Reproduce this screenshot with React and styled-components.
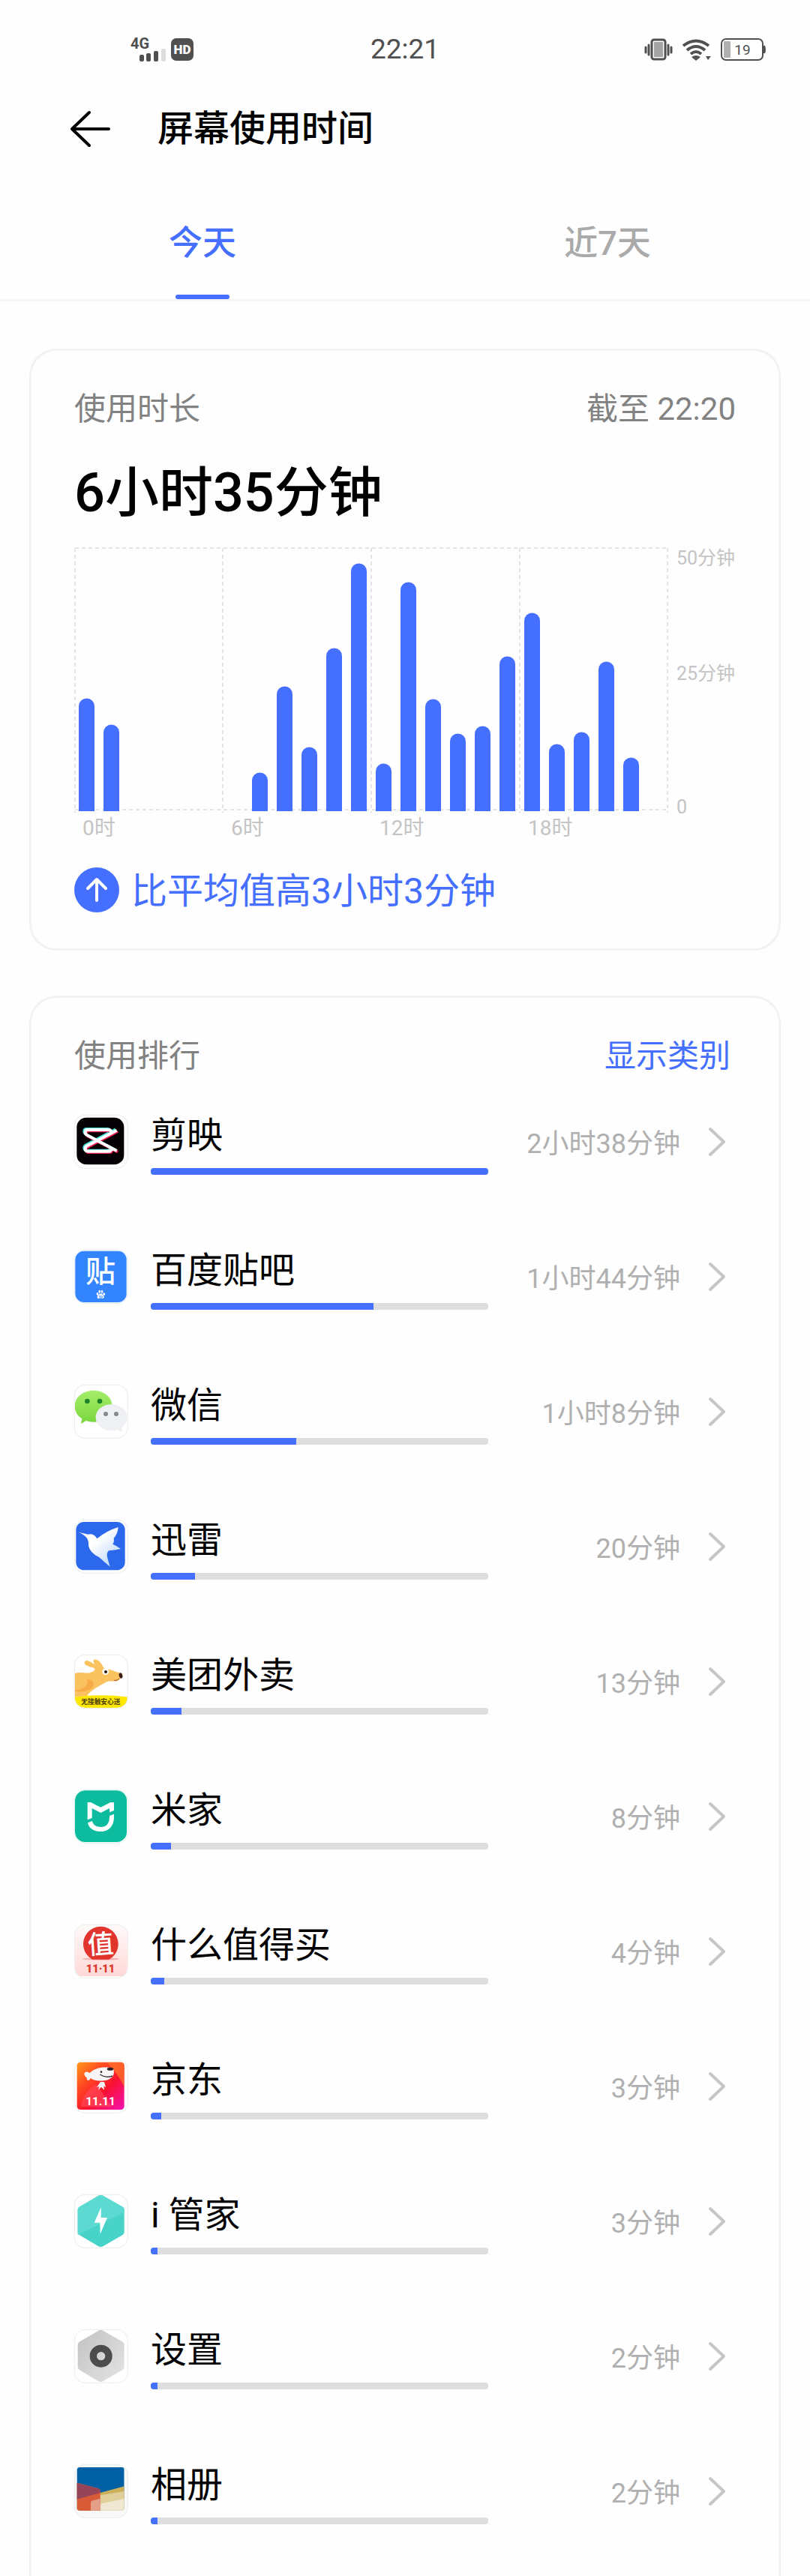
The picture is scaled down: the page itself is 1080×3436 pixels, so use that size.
import React, { useState } from 'react';
import styled, { createGlobalStyle } from 'styled-components';

const GlobalStyle = createGlobalStyle`
  * {
    box-sizing: border-box;
  }
  body {
    margin: 0;
    background: #fefefe;
    color: #000000;
    font-family: Roboto, 'Noto Sans CJK SC', sans-serif;
  }
  button {
    font-family: inherit;
    background: none;
    border: none;
    padding: 0;
    cursor: pointer;
  }
`;

const Page = styled.div`
  width: 100%;
`;

const StatusBar = styled.div`
  display: grid;
  grid-template-columns: 1fr auto 1fr;
  align-items: center;
  height: 112px;
  padding: 20px 58px 0 174px;
  color: #505050;
`;

const StatusGroup = styled.div`
  display: flex;
  align-items: center;
  gap: ${props => props.$gap}px;
  justify-content: ${props => (props.$end ? 'flex-end' : 'flex-start')};
  svg {
    overflow: visible;
  }
`;

const Clock = styled.time`
  font-size: 37px;
  line-height: 40px;
  margin-right: 116px;
`;

const TitleBar = styled.header`
  display: flex;
  align-items: center;
  gap: 62px;
  height: 120px;
  padding: 0 93px;
`;

const BackButton = styled.button`
  display: flex;
`;

const Title = styled.h1`
  margin: 0;
  font-size: 48px;
  font-weight: 500;
  line-height: 56px;
`;

const Tabs = styled.nav`
  display: flex;
  border-bottom: 3px solid #f6f6f6;
`;

const Tab = styled.button`
  flex: 1;
  display: flex;
  flex-direction: column;
  align-items: center;
  justify-content: space-between;
  height: 167px;
  padding-top: 65px;
  font-size: 45px;
  font-weight: 500;
  line-height: 56px;
  color: ${props => (props.$active ? '#456fff' : '#aaaaaa')};
  &::after {
    content: '';
    width: 72px;
    height: 6px;
    border-radius: 3px;
    background: ${props => (props.$active ? '#456fff' : 'transparent')};
  }
`;

const Main = styled.main`
  display: flex;
  flex-direction: column;
  gap: 60px;
  padding: 63px 39px 0;
`;

const Card = styled.section`
  border: 3px solid #f2f2f2;
  border-radius: 36px;
  padding: 50px 57px 48px;
`;

const RankingCard = styled(Card)`
  border-bottom: none;
  border-radius: 36px 36px 0 0;
  padding-bottom: 69px;
`;

const CardHeader = styled.div`
  display: flex;
  justify-content: space-between;
  font-size: 42px;
  line-height: 56px;
  color: #828282;
`;

const CardTitle = styled.h2`
  margin: 0;
  font-size: 42px;
  font-weight: 400;
  line-height: 56px;
`;

const CategoryButton = styled.button`
  margin-right: 7px;
  font-size: 42px;
  line-height: 56px;
  color: #456fff;
`;

const Total = styled.p`
  margin: 40px 0 28px;
  font-size: 72px;
  font-weight: 500;
  line-height: 88px;
`;

const ChartArea = styled.div`
  display: flex;
`;

const Plot = styled.div`
  flex: 1;
  svg {
    display: block;
    width: 100%;
  }
`;

const HourAxis = styled.div`
  display: flex;
  height: 40px;
  margin-top: 1px;
  font-size: 28px;
  line-height: 40px;
  color: #c4c4c4;
`;

const HourLabel = styled.span`
  flex: 1;
  padding-left: 11px;
`;

const MinuteAxis = styled.div`
  display: grid;
  grid-template-rows: 154px 178px 30px;
  width: 90px;
  padding-left: 11px;
  font-size: 25px;
  line-height: 30px;
  white-space: nowrap;
  color: #c4c4c4;
`;

const Compare = styled.div`
  display: flex;
  align-items: center;
  gap: 16px;
  margin-top: 32px;
  font-size: 48px;
  line-height: 56px;
  color: #456fff;
`;

const CompareText = styled.span`
  padding-top: 4px;
`;

const AppList = styled.ul`
  display: flex;
  flex-direction: column;
  gap: 100px;
  margin: 50px 0 0;
  padding: 0;
  list-style: none;
`;

const AppRow = styled.a`
  display: flex;
  height: 80px;
  padding-right: 12px;
  color: inherit;
  text-decoration: none;
`;

const AppInfo = styled.div`
  flex: 1;
  margin-left: 30px;
`;

const AppName = styled.div`
  font-size: 48px;
  line-height: 56px;
`;

const Track = styled.div`
  height: 9px;
  margin-top: 15px;
  border-radius: 4px;
  overflow: hidden;
  background: #dedede;
`;

const Fill = styled.div`
  height: 100%;
  background: #456fff;
`;

const Duration = styled.div`
  width: 256px;
  text-align: right;
  font-size: 36px;
  line-height: 78px;
  color: #b0b0b0;
`;

const Chevron = styled.svg`
  width: 26px;
  height: 72px;
  margin-left: 36px;
`;

const IconFrame = styled.svg`
  width: 72px;
  height: 72px;
  flex: none;
  overflow: visible;
`;

/* minutes used in each hour of the day, as bar heights */
const hours = [
  150, 115, 0, 0, 0, 0, 0, 51, 166, 85, 217, 330,
  63, 305, 149, 103, 113, 206, 264, 89, 105, 199, 71, 0,
];

function UsageChart() {
  return (
    <svg viewBox="0 0 792 354" role="img" aria-label="使用时长">
      <g stroke="#e4e4e4" strokeWidth="2" strokeDasharray="5 4">
        <path d="M1 1H791M1 350H791" />
        {[1, 198, 396, 594, 791].map(x => (
          <path key={x} d={`M${x} 1V354`} />
        ))}
      </g>
      {hours.map((h, i) => h > 0 && (
        <path
          key={i}
          fill="#456fff"
          d={`M${i * 33 + 6} 352v${-(h - 10)}a10.5 10.5 0 0 1 21 0v${h - 10}z`}
        />
      ))}
    </svg>
  );
}

function AppIcon({ children, label, id, bg = '#ffffff', border = '#ececec' }) {
  return (
    <IconFrame viewBox="0 0 216 216" aria-hidden="true">
      <defs>
        <clipPath id={`${id}-clip`}>
          <rect x="2" y="2" width="211" height="211" rx="42" />
        </clipPath>
      </defs>
      <rect x="1" y="1" width="213" height="213" rx="42" fill={bg} />
      <g clipPath={`url(#${id}-clip)`}>{children}</g>
      <rect x="1" y="1" width="213" height="213" rx="42" fill="none" stroke={border} strokeWidth="3" />
      {label}
    </IconFrame>
  );
}

const JianyingIcon = () => {
  const loop = 'M147 78V69Q147 60 138 60H54Q44 60 44 70Q44 78 52 82L170 144M147 128V137Q147 146 138 146H54Q44 146 44 136Q44 128 52 124L170 62';
  return (
    <AppIcon id="jianying">
      <rect x="10" y="11" width="189" height="188" rx="38" fill="#050003" />
      <g fill="none" strokeWidth="10">
        <path d={loop} stroke="#4fe3df" transform="translate(-5 -4)" />
        <path d={loop} stroke="#ee1d52" transform="translate(4 5)" />
        <path d={loop} stroke="#ffffff" strokeWidth="12" />
      </g>
    </AppIcon>
  );
};

const TiebaIcon = () => (
  <AppIcon
    id="tieba"
    border="#dcebfb"
    label={<text x="105" y="129" textAnchor="middle" fontSize="120" fontWeight="500" fill="#ffffff">贴</text>}
  >
    <rect x="4" y="5" width="205" height="205" rx="34" fill="#3385ff" />
    <g fill="#ffffff">
      <ellipse cx="93" cy="177" rx="4" ry="6" />
      <ellipse cx="101" cy="167" rx="4" ry="6" />
      <ellipse cx="111" cy="167" rx="4" ry="6" />
      <ellipse cx="119" cy="178" rx="4" ry="6" />
      <path d="M106 175C98 176 98 182 93 186C88 194 96 197 106 193C116 197 123 192 118 186C113 181 113 175 106 175Z" />
    </g>
    <path d="M101 183v7h4v-8M108 183v7h5v-5" stroke="#3385ff" strokeWidth="2" fill="none" />
  </AppIcon>
);

const WechatIcon = () => (
  <AppIcon id="wechat">
    <defs>
      <linearGradient id="wechat-green" x2="0" y2="1">
        <stop stopColor="#a5ee6a" />
        <stop offset="1" stopColor="#7ad63c" />
      </linearGradient>
    </defs>
    <path d="M77 23C119 23 152 50 152 86C152 122 119 149 77 149C66 149 57 148 48 144L27 156L31 136C12 124 2 106 2 86C2 50 35 23 77 23Z" fill="url(#wechat-green)" />
    <path d="M148 79C183 79 212 102 212 131C212 148 203 162 189 171L191 190L173 180Q161 184 148 184C114 184 86 160 86 131C86 102 114 79 148 79Z" fill="#eff0f3" />
    <circle cx="52" cy="66" r="10" fill="#1d8328" />
    <circle cx="102" cy="66" r="10" fill="#1d8328" />
    <circle cx="126" cy="117" r="9" fill="#848b8c" />
    <circle cx="168" cy="117" r="9" fill="#848b8c" />
  </AppIcon>
);

const XunleiIcon = () => (
  <AppIcon id="xunlei">
    <defs>
      <linearGradient id="xunlei-bird" x2="1" y2="1">
        <stop offset="0.4" stopColor="#ffffff" />
        <stop offset="1" stopColor="#a9cdf8" />
      </linearGradient>
    </defs>
    <rect x="7" y="9" width="196" height="193" rx="32" fill="#2b68ec" />
    <path d="M17 50L56 59Q78 54 91 76Q130 44 176 30Q174 58 158 74Q161 88 154 98Q170 104 186 117Q162 123 138 124Q128 134 132 150L143 188Q120 170 100 151Q62 132 57 104Q58 84 50 73Q38 58 17 50Z" fill="url(#xunlei-bird)" />
  </AppIcon>
);

const MeituanIcon = () => (
  <AppIcon
    id="meituan"
    label={<text x="106" y="197" textAnchor="middle" fontSize="26" fontWeight="700" fill="#4a3a08">无接触安心送</text>}
  >
    <path d="M0 76C26 66 52 80 74 68C88 60 84 52 66 50C50 46 36 38 42 28C50 16 68 32 82 38C74 26 74 18 88 20C102 22 112 40 118 54C142 58 172 72 192 75C196 86 186 99 172 105C156 110 140 102 124 112C96 128 68 142 50 166L0 170Z" fill="#fbc35f" />
    <path d="M50 98C72 100 84 112 74 128C60 150 26 148 0 148V142C30 142 60 126 50 98Z" fill="#f7ab48" />
    <path d="M160 103Q174 105 180 96" fill="none" stroke="#8a4a1c" strokeWidth="3" />
    <circle cx="125" cy="68" r="13" fill="#ffffff" />
    <circle cx="126" cy="69" r="6" fill="#2a1408" />
    <ellipse cx="186" cy="84" rx="7" ry="11" fill="#3b2118" transform="rotate(-15 186 84)" />
    <path d="M0 170Q105 156 216 170V216H0Z" fill="#ffe800" />
  </AppIcon>
);

const MijiaIcon = () => (
  <AppIcon id="mijia" border="#d6f3ec">
    <rect x="3" y="4" width="207" height="206" rx="40" fill="#0dbc9e" />
    <path d="M53 51H66L106 71L145 51H159V84L141 91V75L106 93L71 75V114L53 121Z" fill="#ffffff" />
    <path d="M54 133L72 126C75 142 88 150 106 150C127 150 141 136 141 110V105L159 98V110C159 147 137 168 106 168C78 168 58 155 54 133Z" fill="#ffffff" />
  </AppIcon>
);

const ZhiIcon = () => (
  <AppIcon
    id="zhi"
    label={
      <>
        <text x="106" y="116" textAnchor="middle" fontSize="104" fontWeight="500" fill="#ffffff" transform="rotate(-4 106 80)">值</text>
        <text x="105" y="192" textAnchor="middle" fontSize="44" fontWeight="900" fill="#dc3a2f">11·11</text>
      </>
    }
  >
    <defs>
      <linearGradient id="zhi-bg" x2="0" y2="1">
        <stop stopColor="#fffafa" />
        <stop offset="1" stopColor="#ffd9d7" />
      </linearGradient>
    </defs>
    <rect x="2" y="2" width="211" height="205" fill="url(#zhi-bg)" />
    <ellipse cx="106" cy="138" rx="74" ry="5" fill="#f4b5b0" />
    <path d="M73 140A70 70 0 1 1 139 140Z" fill="#e0342c" />
  </AppIcon>
);

const JdIcon = () => (
  <AppIcon
    id="jd"
    label={<text x="105" y="182" textAnchor="middle" fontSize="46" fontWeight="700" fill="#ffffff">11.11</text>}
  >
    <defs>
      <linearGradient id="jd-bg" x2="1" y2="1">
        <stop stopColor="#ff9a1c" />
        <stop offset="0.3" stopColor="#ff4a22" />
        <stop offset="0.6" stopColor="#fa1130" />
        <stop offset="1" stopColor="#f312b4" />
      </linearGradient>
    </defs>
    <rect x="11" y="11" width="189" height="190" rx="14" fill="url(#jd-bg)" />
    <path d="M130 11Q170 50 200 110V25Q200 11 186 11Z" fill="#ff7a26" opacity="0.7" />
    <path d="M26 190Q40 120 90 100L150 190Z" fill="#ff4d5c" opacity="0.6" />
    <path d="M62 54C80 36 110 28 142 33Q158 32 158 44C162 62 150 80 122 84C96 88 76 84 66 74C58 90 48 84 50 72C40 66 36 54 46 50Q52 48 62 54Z" fill="#f7f5f6" />
    <path d="M103 60Q126 76 153 66" fill="none" stroke="#42343a" strokeWidth="4" />
    <ellipse cx="144" cy="38" rx="13" ry="6" fill="#2d2226" />
    <circle cx="108" cy="50" r="4" fill="#2d2226" />
    <path d="M104 90L90 112L100 108L96 122L108 110L120 122L118 106L126 112L120 90Z" fill="#f7f5f6" />
  </AppIcon>
);

const hexagon = 'M97 5Q106 0 115 5L194 50Q200 54 200 61V151Q200 158 194 162L115 208Q106 213 97 208L20 162Q14 158 14 151V61Q14 54 20 50Z';

const ManagerIcon = () => (
  <AppIcon id="manager">
    <path d={hexagon} fill="#48d3c9" />
    <path d="M97 5Q106 0 115 5L194 50Q200 54 200 61V72L14 162V61Q14 54 20 50Z" fill="#5cdad1" />
    <path d="M107 52L80 113H103L104 158L132 93H107Z" fill="#ffffff" />
  </AppIcon>
);

const SettingsIcon = () => (
  <AppIcon id="settings">
    <defs>
      <linearGradient id="settings-bg" x1="0" x2="1" y2="1">
        <stop stopColor="#c2c2c2" />
        <stop offset="1" stopColor="#e4e4e4" />
      </linearGradient>
    </defs>
    <path d={hexagon} fill="url(#settings-bg)" />
    <circle cx="107" cy="107" r="31" fill="none" stroke="#4c4c4c" strokeWidth="28" />
  </AppIcon>
);

const AlbumIcon = () => (
  <AppIcon id="album" bg="#f8f8f8">
    <defs>
      <clipPath id="album-photo">
        <rect x="11" y="12" width="189" height="173" rx="10" />
      </clipPath>
    </defs>
    <g clipPath="url(#album-photo)">
      <rect x="10" y="12" width="190" height="174" fill="#0060a3" />
      <path d="M10 74L96 97Q104 100 104 110V114L200 88V186H10Z" fill="#cdb05c" />
      <path d="M104 124L200 108V186H66V140Z" fill="#e0cf9b" />
      <path d="M104 158L200 138V186H90Z" fill="#f0e7d2" />
      <path d="M10 74L96 97Q104 100 104 110V186H10Z" fill="#d95a37" />
      <path d="M10 74L96 97Q104 100 104 110V114L10 140Z" fill="#964459" />
      <path d="M66 154Q66 147 74 145L104 137V186H66Z" fill="#e39f87" />
    </g>
  </AppIcon>
);

const apps = [
  { name: '剪映', time: '2小时38分钟', share: 100, Icon: JianyingIcon },
  { name: '百度贴吧', time: '1小时44分钟', share: 66, Icon: TiebaIcon },
  { name: '微信', time: '1小时8分钟', share: 43, Icon: WechatIcon },
  { name: '迅雷', time: '20分钟', share: 13, Icon: XunleiIcon },
  { name: '美团外卖', time: '13分钟', share: 9, Icon: MeituanIcon },
  { name: '米家', time: '8分钟', share: 6, Icon: MijiaIcon },
  { name: '什么值得买', time: '4分钟', share: 4, Icon: ZhiIcon },
  { name: '京东', time: '3分钟', share: 3, Icon: JdIcon },
  { name: 'i 管家', time: '3分钟', share: 2, Icon: ManagerIcon },
  { name: '设置', time: '2分钟', share: 2, Icon: SettingsIcon },
  { name: '相册', time: '2分钟', share: 2, Icon: AlbumIcon },
];

const SignalIcon = () => (
  <svg width="48" height="34" viewBox="0 0 48 34" aria-label="4G">
    <text x="0" y="16" fontSize="20" fontWeight="700" fill="#505050">4G</text>
    <g fill="#505050">
      <rect x="12" y="24" width="6" height="9" rx="2" />
      <rect x="21" y="22" width="6" height="11" rx="2" />
      <rect x="31" y="19" width="6" height="14" rx="2" />
      <rect x="41" y="16" width="6" height="17" rx="2" fill="#dcdcdc" />
    </g>
  </svg>
);

const HdIcon = () => (
  <svg width="30" height="30" viewBox="0 0 30 30" aria-label="HD">
    <rect width="30" height="30" rx="7" fill="#505050" />
    <text x="15" y="21" textAnchor="middle" fontSize="17" fontWeight="900" fill="#ffffff">HD</text>
  </svg>
);

const VibrateIcon = () => (
  <svg width="38" height="30" viewBox="0 0 38 30">
    <rect x="10" y="2" width="18" height="26" rx="3" fill="#ffffff" stroke="#505050" strokeWidth="3" />
    <rect x="13" y="5" width="12" height="20" fill="#a4a4a4" />
    <path d="M2 12V19M6 9V22M32 9V22M36 12V19" stroke="#505050" strokeWidth="3" strokeLinecap="round" />
  </svg>
);

const WifiIcon = () => (
  <svg width="38" height="30" viewBox="0 0 38 30">
    <g fill="none" stroke="#505050" strokeWidth="4">
      <path d="M1 10Q18 -3 35 10" />
      <path d="M6 16Q18 6 30 16" />
      <path d="M11 21Q18 15 25 21" />
    </g>
    <path d="M12 25Q18 21 24 25L18 30Z" fill="#505050" />
    <path d="M31 24H38L34 29Z" fill="#505050" />
  </svg>
);

const BatteryIcon = () => (
  <svg width="61" height="30" viewBox="0 0 61 30" aria-label="19%">
    <rect x="1" y="1" width="55" height="28" rx="6" fill="#ffffff" stroke="#505050" strokeWidth="2" />
    <rect x="4" y="4" width="9" height="22" rx="1" fill="#b0b0b0" />
    <path d="M58 10Q60 15 58 20Z" fill="#505050" stroke="#505050" strokeWidth="2" />
    <text x="29" y="22" textAnchor="middle" fontSize="19" fill="#505050">19</text>
  </svg>
);

export default function App() {
  const [tab, setTab] = useState('today');

  return (
    <Page>
      <GlobalStyle />
      <StatusBar>
        <StatusGroup $gap={6}>
          <SignalIcon />
          <HdIcon />
        </StatusGroup>
        <Clock>22:21</Clock>
        <StatusGroup $gap={13} $end>
          <VibrateIcon />
          <WifiIcon />
          <BatteryIcon />
        </StatusGroup>
      </StatusBar>

      <TitleBar>
        <BackButton type="button" aria-label="返回">
          <svg width="55" height="50" viewBox="0 0 55 50" fill="none" stroke="#000000" strokeWidth="4" strokeLinecap="round" strokeLinejoin="round">
            <path d="M52 25H3M26 3L3 25L26 47" />
          </svg>
        </BackButton>
        <Title>屏幕使用时间</Title>
      </TitleBar>

      <Tabs>
        <Tab type="button" $active={tab === 'today'} onClick={() => setTab('today')}>今天</Tab>
        <Tab type="button" $active={tab === 'week'} onClick={() => setTab('week')}>近7天</Tab>
      </Tabs>

      <Main>
        <Card>
          <CardHeader>
            <CardTitle>使用时长</CardTitle>
            <span>截至 22:20</span>
          </CardHeader>
          <Total>6小时35分钟</Total>
          <ChartArea>
            <Plot>
              <UsageChart />
              <HourAxis>
                <HourLabel>0时</HourLabel>
                <HourLabel>6时</HourLabel>
                <HourLabel>12时</HourLabel>
                <HourLabel>18时</HourLabel>
              </HourAxis>
            </Plot>
            <MinuteAxis>
              <span>50分钟</span>
              <span>25分钟</span>
              <span>0</span>
            </MinuteAxis>
          </ChartArea>
          <Compare>
            <svg width="60" height="60" viewBox="0 0 60 60" aria-hidden="true">
              <circle cx="30" cy="30" r="30" fill="#456fff" />
              <path d="M30 44V17M18 28L30 16L42 28" fill="none" stroke="#ffffff" strokeWidth="4" strokeLinecap="round" strokeLinejoin="round" />
            </svg>
            <CompareText>比平均值高3小时3分钟</CompareText>
          </Compare>
        </Card>

        <RankingCard>
          <CardHeader>
            <CardTitle>使用排行</CardTitle>
            <CategoryButton type="button">显示类别</CategoryButton>
          </CardHeader>
          <AppList>
            {apps.map(({ name, time, share, Icon }) => (
              <li key={name}>
                <AppRow href="#">
                  <Icon />
                  <AppInfo>
                    <AppName>{name}</AppName>
                    <Track>
                      <Fill style={{ width: `${share}%` }} />
                    </Track>
                  </AppInfo>
                  <Duration>{time}</Duration>
                  <Chevron viewBox="0 0 26 72" fill="none" stroke="#c6c6c6" strokeWidth="4" strokeLinecap="round" strokeLinejoin="round" aria-hidden="true">
                    <path d="M4 19L22 36L4 53" />
                  </Chevron>
                </AppRow>
              </li>
            ))}
          </AppList>
        </RankingCard>
      </Main>
    </Page>
  );
}
